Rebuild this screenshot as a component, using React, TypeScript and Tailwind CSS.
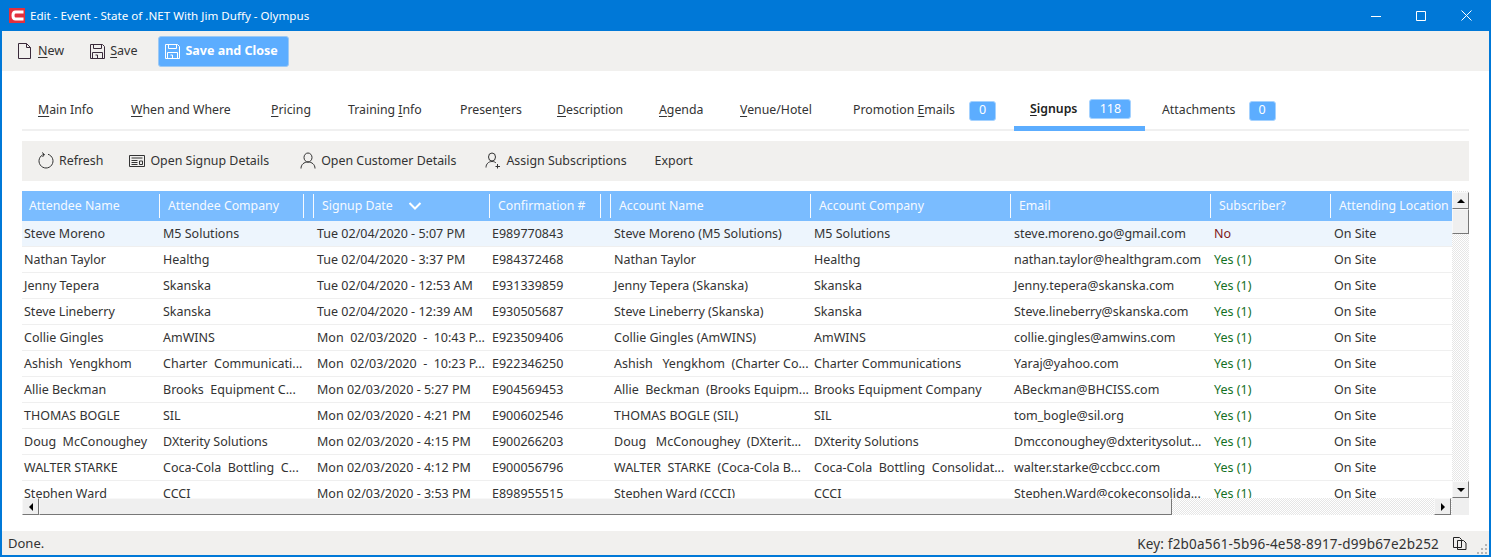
import { ReactNode } from "react";

const font = "font-['Noto_Sans','Open_Sans',sans-serif]";

const columns = [
  { title: "Attendee Name", width: "w-[137px]" },
  { title: "Attendee Company", width: "w-[154px]", extra: "w-[145px]" },
  { title: "Signup Date", width: "w-[176px]", sorted: true },
  { title: "Confirmation #", width: "w-[121px]", extra: "w-[112px]" },
  { title: "Account Name", width: "w-[200px]" },
  { title: "Account Company", width: "w-[200px]" },
  { title: "Email", width: "w-[200px]" },
  { title: "Subscriber?", width: "w-[120px]" },
  { title: "Attending Location", width: "w-[122px]" },
];

const rows = [
  ["Steve Moreno", "M5 Solutions", "Tue 02/04/2020 - 5:07 PM", "E989770843", "Steve Moreno (M5 Solutions)", "M5 Solutions", "steve.moreno.go@gmail.com", "No"],
  ["Nathan Taylor", "Healthg", "Tue 02/04/2020 - 3:37 PM", "E984372468", "Nathan Taylor", "Healthg", "nathan.taylor@healthgram.com", "Yes (1)"],
  ["Jenny Tepera", "Skanska", "Tue 02/04/2020 - 12:53 AM", "E931339859", "Jenny Tepera (Skanska)", "Skanska", "Jenny.tepera@skanska.com", "Yes (1)"],
  ["Steve Lineberry", "Skanska", "Tue 02/04/2020 - 12:39 AM", "E930505687", "Steve Lineberry (Skanska)", "Skanska", "Steve.lineberry@skanska.com", "Yes (1)"],
  ["Collie Gingles", "AmWINS", "Mon  02/03/2020  -  10:43 P...", "E923509406", "Collie Gingles (AmWINS)", "AmWINS", "collie.gingles@amwins.com", "Yes (1)"],
  ["Ashish  Yengkhom", "Charter  Communicati...", "Mon  02/03/2020  -  10:23 P...", "E922346250", "Ashish   Yengkhom  (Charter Co...", "Charter Communications", "Yaraj@yahoo.com", "Yes (1)"],
  ["Allie Beckman", "Brooks  Equipment C...", "Mon 02/03/2020 - 5:27 PM", "E904569453", "Allie  Beckman  (Brooks Equipm...", "Brooks Equipment Company", "ABeckman@BHCISS.com", "Yes (1)"],
  ["THOMAS BOGLE", "SIL", "Mon 02/03/2020 - 4:21 PM", "E900602546", "THOMAS BOGLE (SIL)", "SIL", "tom_bogle@sil.org", "Yes (1)"],
  ["Doug  McConoughey", "DXterity Solutions", "Mon 02/03/2020 - 4:15 PM", "E900266203", "Doug   McConoughey  (DXterit...", "DXterity Solutions", "Dmcconoughey@dxteritysolut...", "Yes (1)"],
  ["WALTER STARKE", "Coca-Cola  Bottling  C...", "Mon 02/03/2020 - 4:12 PM", "E900056796", "WALTER  STARKE  (Coca-Cola B...", "Coca-Cola  Bottling  Consolidat...", "walter.starke@ccbcc.com", "Yes (1)"],
  ["Stephen Ward", "CCCI", "Mon 02/03/2020 - 3:53 PM", "E898955515", "Stephen Ward (CCCI)", "CCCI", "Stephen.Ward@cokeconsolida...", "Yes (1)"],
];

function Mnemonic({ before = "", letter, after }: { before?: string; letter: string; after: string }) {
  return (
    <span>
      {before}
      <u className="underline-offset-2">{letter}</u>
      {after}
    </span>
  );
}

function SaveIcon({ color = "#3a2a3a" }: { color?: string }) {
  return (
    <svg width="15" height="15" viewBox="0 0 15 15" fill="none" stroke={color} strokeWidth="1">
      <path d="M.5.5h12l2 2v12H.5z" />
      <path d="M3.500.5v4h8v-4M2.500 14.500v-6h10v6M5.500 11h2v3.500" />
    </svg>
  );
}

function ActionButton({ icon, children }: { icon: ReactNode; children: ReactNode }) {
  return (
    <div className="flex items-center gap-[5px]">
      {icon}
      <span>{children}</span>
    </div>
  );
}

function Tab({
  children,
  badge,
  badgeClass = "",
  active,
  width,
}: {
  children: ReactNode;
  badge?: string;
  badgeClass?: string;
  active?: boolean;
  width: string;
}) {
  return (
    <div className={`${width} relative flex h-[58px] shrink-0 items-end pb-[10px] pl-[16px] text-[12.3px] ${active ? "font-semibold text-[#222]" : ""}`}>
      <span className="flex items-center">
        {children}
        {badge && (
          <span className={`flex h-[20px] items-center justify-center rounded-[3px] border border-[#a5d2ff] bg-[#5cadff] text-[12.5px] font-normal text-white ${badgeClass}`}>
            {badge}
          </span>
        )}
      </span>
      {active && <div className="absolute bottom-[-2px] left-0 right-[1px] h-[5px] bg-[#5cadff]" />}
    </div>
  );
}

function ScrollButton({ dir }: { dir: "up" | "down" | "left" | "right" }) {
  const arrow = {
    up: "M1 7L5 3L9 7z",
    down: "M1 3L5 7L9 3z",
    left: "M7 1L3 5L7 9z",
    right: "M3 1L7 5L3 9z",
  }[dir];
  return (
    <div className="flex h-[17px] w-[17px] shrink-0 items-center justify-center border border-[#f8f8f8] border-r-[#777] border-b-[#777] bg-[#efefef]">
      <svg width="10" height="10" viewBox="0 0 10 10">
        <path d={arrow} fill="#000" />
      </svg>
    </div>
  );
}

export default function App() {
  return (
    <div className={`${font} flex h-[557px] w-[1491px] flex-col overflow-hidden border-x-2 border-b-2 border-x-[#0078d7] border-b-[#0078d7] bg-white text-[12.5px] text-[#333]`}>
      {/* title bar */}
      <div className="mx-[-2px] flex h-[31px] shrink-0 items-center bg-[#0078d7] pl-[9px] text-white">
        <svg width="16" height="15" viewBox="0 0 16 15">
          <rect width="16" height="15" fill="#e3303d" />
          <path d="M14.500 4H6.500Q4 4 4 7.500T6.500 11H14.500" fill="none" stroke="#fff" strokeWidth="3" />
        </svg>
        <span className="ml-[5px] text-[11.6px]">Edit - Event - State of .NET With Jim Duffy - Olympus</span>
        <div className="ml-auto flex items-center gap-[35px] pr-[19px]">
          <svg width="10" height="11" viewBox="0 0 10 11" stroke="#fff" className="mt-[1px]">
            <path d="M0 5.500h10" />
          </svg>
          <svg width="10" height="10" viewBox="0 0 10 10" fill="none" stroke="#fff">
            <path d="M.5.5h9v9h-9z" />
          </svg>
          <svg width="11" height="11" viewBox="0 0 11 11" fill="none" stroke="#fff">
            <path d="M.5.5l10 10M10.500.5l-10 10" />
          </svg>
        </div>
      </div>

      {/* main toolbar */}
      <div className="flex h-[40px] shrink-0 items-center bg-[#f1f0ee] pl-[15px]">
        <ActionButton
          icon={
            <svg width="16" height="18" viewBox="0 0 16 18" fill="none" stroke="#3a2a3a">
              <path d="M1.500 1.500h8l4 4v11h-12zM9.500 1.500v4h4" />
            </svg>
          }
        >
          <Mnemonic letter="N" after="ew" />
        </ActionButton>
        <div className="ml-[26px]">
          <ActionButton icon={<SaveIcon />}>
            <Mnemonic letter="S" after="ave" />
          </ActionButton>
        </div>
        <div className="ml-[21px] flex h-[31px] w-[131px] items-center gap-[5px] rounded-[3px] border border-[#9cc9f5] bg-[#5cadff] pl-[6px] font-bold text-white">
          <SaveIcon color="#fff" />
          <span>Save and Close</span>
        </div>
      </div>

      {/* tabs */}
      <div className="mx-[20px] flex h-[60px] shrink-0 border-b-2 border-[#f0f0f0]">
        <Tab width="w-[93px]"><Mnemonic letter="M" after="ain Info" /></Tab>
        <Tab width="w-[140px]"><Mnemonic letter="W" after="hen and Where" /></Tab>
        <Tab width="w-[77px]"><Mnemonic letter="P" after="ricing" /></Tab>
        <Tab width="w-[112px]"><Mnemonic before="Training " letter="I" after="nfo" /></Tab>
        <Tab width="w-[97px]"><Mnemonic before="Presen" letter="t" after="ers" /></Tab>
        <Tab width="w-[102px]"><Mnemonic letter="D" after="escription" /></Tab>
        <Tab width="w-[81px]"><Mnemonic letter="A" after="genda" /></Tab>
        <Tab width="w-[113px]"><Mnemonic letter="V" after="enue/Hotel" /></Tab>
        <Tab width="w-[177px]" badge="0" badgeClass="ml-[14px] mb-[-2px] w-[27px]"><Mnemonic before="Promotion " letter="E" after="mails" /></Tab>
        <Tab width="w-[132px]" badge="118" badgeClass="ml-[12px] w-[42px]" active><Mnemonic letter="S" after="ignups" /></Tab>
        <Tab width="w-[148px]" badge="0" badgeClass="ml-[13px] mb-[-2px] w-[27px]"><span>Attachments</span></Tab>
      </div>

      {/* grid toolbar */}
      <div className="mx-[20px] mt-[10px] flex h-[40px] shrink-0 items-center bg-[#f1f0ee] pl-[16px] text-[12.4px]">
        <ActionButton
          icon={
            <svg width="16" height="17" viewBox="0 0 16 17" fill="none" stroke="#333">
              <path d="M10 2.300A7 7 0 1 1 6 2.300M4 .5L6.500 2.500L4.500 5" />
            </svg>
          }
        >
          Refresh
        </ActionButton>
        <div className="ml-[26px]">
          <ActionButton
            icon={
              <svg width="16" height="12" viewBox="0 0 16 12" fill="none" stroke="#333">
                <path d="M.5.5h15v11H.5zM2.500 3h11M2.500 5.500h6M2.500 7.500h6M2.500 9.500h6M10.500 6h3v3.500h-3z" />
              </svg>
            }
          >
            Open Signup Details
          </ActionButton>
        </div>
        <div className="ml-[31px]">
          <ActionButton
            icon={
              <svg width="16" height="17" viewBox="0 0 16 17" fill="none" stroke="#333">
                <ellipse cx="8" cy="5.500" rx="4" ry="4.500" />
                <path d="M1 16.500C1 12.500 4 10 8 10s7 2.500 7 6.500" />
              </svg>
            }
          >
            Open Customer Details
          </ActionButton>
        </div>
        <div className="ml-[29px]">
          <ActionButton
            icon={
              <svg width="16" height="17" viewBox="0 0 16 17" fill="none" stroke="#333">
                <ellipse cx="7" cy="5" rx="3.500" ry="4" />
                <path d="M1 15.500C1 12 3.500 9.500 7 9.500c2 0 3 .5 4 1.500M12.500 12v4.500M10.500 14.500h4.500" />
              </svg>
            }
          >
            Assign Subscriptions
          </ActionButton>
        </div>
        <span className="ml-[28px]">Export</span>
      </div>

      {/* grid */}
      <div className="mx-[20px] mt-[10px] grid h-[324px] shrink-0 grid-cols-[1430px_17px] grid-rows-[307px_17px]">
        <div className="overflow-hidden">
          <div className="flex h-[30px] bg-[#7abcff] text-[12.3px] text-[#f6faff]">
            {columns.map((c, i) => (
              <div key={c.title} className={`${c.width} relative flex shrink-0 items-center overflow-hidden whitespace-nowrap ${i === 0 ? "pl-[7px]" : "pl-[9px]"}`}>
                {i > 0 && <div className="absolute top-[3px] bottom-[3px] left-0 w-px bg-[#f6faff]" />}
                {c.extra && <div className={`${c.extra} absolute top-[3px] bottom-[3px] left-0 border-r border-[#f6faff]`} />}
                <span>{c.title}</span>
                {c.sorted && (
                  <svg className="ml-[15px]" width="14" height="10" viewBox="0 0 14 10" fill="none" stroke="#fff" strokeWidth="2">
                    <path d="M1.500 2L7 7.500L12.500 2" />
                  </svg>
                )}
              </div>
            ))}
          </div>
          {rows.map((row, r) => (
            <div key={row[3]} className={`flex h-[26px] border-b border-[#efefef] ${r === 0 ? "bg-[#edf5fd]" : ""}`}>
              {row.map((cell, i) => (
                <div
                  key={i}
                  className={`${columns[i].width} flex shrink-0 items-center overflow-hidden whitespace-pre pt-[2px] ${i === 0 ? "pl-[2px]" : i === 3 ? "pl-[3px]" : "pl-[4px]"} ${i === 7 ? (cell === "No" ? "text-[#7d1a1a]" : "text-[#14701f]") : ""}`}
                >
                  {cell}
                </div>
              ))}
              <div className={`${columns[8].width} flex shrink-0 items-center pl-[4px] pt-[2px]`}>On Site</div>
            </div>
          ))}
        </div>

        {/* vertical scrollbar */}
        <div className="flex flex-col justify-between bg-[repeating-conic-gradient(#e6e6e6_0_25%,#ffffff_0_50%)] bg-[length:2px_2px] pt-[1px]">
          <div className="flex flex-col">
            <ScrollButton dir="up" />
            <div className="h-[25px] w-[17px] border border-[#f8f8f8] border-r-[#777] border-b-[#777] bg-[#efefef]" />
          </div>
          <ScrollButton dir="down" />
        </div>

        {/* horizontal scrollbar */}
        <div className="flex bg-[repeating-conic-gradient(#e6e6e6_0_25%,#ffffff_0_50%)] bg-[length:2px_2px]">
          <ScrollButton dir="left" />
          <div className="w-[1133px] border border-[#f8f8f8] border-r-[#777] border-b-[#777] bg-[#efefef]" />
          <div className="ml-auto mr-[1px]">
            <ScrollButton dir="right" />
          </div>
        </div>
        <div className="bg-[#efefef]" />
      </div>

      {/* status bar */}
      <div className="mt-auto flex h-[24px] shrink-0 items-center bg-[#f1f0ee] pl-[6px]">
        <span className="pt-[2px] text-[13px]">Done.</span>
        <span className="ml-auto pt-[2px] text-[13.500px] tracking-[0.2px]">Key: f2b0a561-5b96-4e58-8917-d99b67e2b252</span>
        <svg className="ml-[14px]" width="14" height="13" viewBox="0 0 14 13" fill="none" stroke="#222">
          <path d="M.5.5h6l2 2v8H.5zM4.500 3.500h6l2.500 2.500v6.500H4.500z" fill="#f1f0ee" />
        </svg>
        <svg className="ml-[9px] mr-[1px] self-end" width="12" height="12" viewBox="0 0 12 12" fill="#b5b5b5">
          <rect x="9" y="1" width="2" height="2" />
          <rect x="5" y="5" width="2" height="2" />
          <rect x="9" y="5" width="2" height="2" />
          <rect x="1" y="9" width="2" height="2" />
          <rect x="5" y="9" width="2" height="2" />
          <rect x="9" y="9" width="2" height="2" />
        </svg>
      </div>
    </div>
  );
}
